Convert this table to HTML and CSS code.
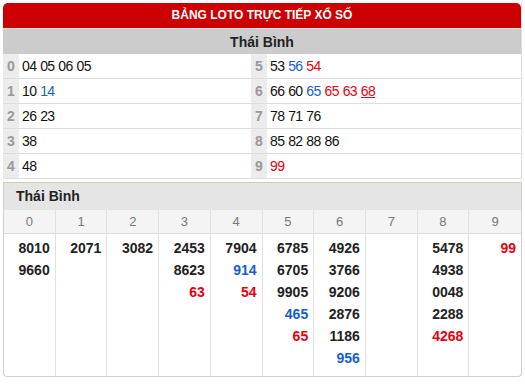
FILE: index.html
```html
<!DOCTYPE html>
<html>
<head>
<meta charset="utf-8">
<link rel="stylesheet" href="styles.css">
</head>
<body>
<div class="wrap">
  <div class="top">
    <div class="title">BẢNG LOTO TRỰC TIẾP XỔ SỐ</div>
    <div class="prov">Thái Bình</div>
    <div class="grid">
      <div class="row"><span class="d">0</span><span class="n">04 05 06 05</span></div>
      <div class="row"><span class="d">5</span><span class="n">53 <b class="bl">56</b> <b class="rd">54</b></span></div>
      <div class="row"><span class="d">1</span><span class="n">10 <b class="bl">14</b></span></div>
      <div class="row"><span class="d">6</span><span class="n">66 60 <b class="bl">65</b> <b class="rd">65</b> <b class="rd">63</b> <b class="rd u">68</b></span></div>
      <div class="row"><span class="d">2</span><span class="n">26 23</span></div>
      <div class="row"><span class="d">7</span><span class="n">78 71 76</span></div>
      <div class="row"><span class="d">3</span><span class="n">38</span></div>
      <div class="row"><span class="d">8</span><span class="n">85 82 88 86</span></div>
      <div class="row"><span class="d">4</span><span class="n">48</span></div>
      <div class="row"><span class="d">9</span><span class="n"><b class="rd">99</b></span></div>
    </div>
  </div>
  <div class="bottom">
    <div class="bhead">Thái Bình</div>
    <div class="cols heads">
      <div>0</div><div>1</div><div>2</div><div>3</div><div>4</div><div>5</div><div>6</div><div>7</div><div>8</div><div>9</div>
    </div>
    <div class="cols body">
      <div><p>8010</p><p>9660</p></div>
      <div><p>2071</p></div>
      <div><p>3082</p></div>
      <div><p>2453</p><p>8623</p><p class="rd">63</p></div>
      <div><p>7904</p><p class="bl">914</p><p class="rd">54</p></div>
      <div><p>6785</p><p>6705</p><p>9905</p><p class="bl">465</p><p class="rd">65</p></div>
      <div><p>4926</p><p>3766</p><p>9206</p><p>2876</p><p>1186</p><p class="bl">956</p></div>
      <div></div>
      <div><p>5478</p><p>4938</p><p>0048</p><p>2288</p><p class="rd">4268</p></div>
      <div><p class="rd">99</p></div>
    </div>
  </div>
</div>
</body>
</html>
```
FILE: styles.css
```css
* { box-sizing: border-box; }
body {
  margin: 0;
  background: #fff;
  font-family: "Liberation Sans", Arial, sans-serif;
  color: #222;
}
.wrap {
  width: 519px;
  margin: 3px 0 0 3px;
}
.top {
  border-right: 1px solid #ddd;
}
.title {
  height: 25px;
  line-height: 25px;
  background: #cc0000;
  color: #fff;
  font-weight: bold;
  font-size: 12px;
  text-align: center;
  border-radius: 5px 5px 0 0;
}
.prov {
  height: 26px;
  line-height: 26px;
  background: #cccccc;
  text-align: center;
  font-weight: bold;
  font-size: 14px;
  color: #222;
  border-top: 1px solid #e0e0e0;
}
.grid {
  display: grid;
  grid-template-columns: 248px 1fr;
}
.row {
  display: flex;
  height: 25px;
  border-bottom: 1px solid #dddddd;
}
.d {
  width: 16px;
  background: #ececec;
  color: #999;
  font-weight: bold;
  font-size: 14px;
  text-align: center;
  line-height: 24px;
}
.n {
  flex: 1;
  padding-left: 3px;
  font-size: 14px;
  line-height: 24px;
  color: #111;
  letter-spacing: -0.6px;
  word-spacing: 0.5px;
}
.n b { font-weight: normal; }
.bl { color: #1560c8; }
.rd { color: #e8000e; }
.u { text-decoration: underline; }
.bottom {
  margin-top: 3px;
  border: 1px solid #cfcfcf;
  border-top: 1px solid #d8c8ad;
  border-radius: 0 0 4px 4px;
  overflow: hidden;
}
.bhead {
  height: 27px;
  line-height: 27px;
  background: #e5e5e5;
  font-weight: bold;
  font-size: 14px;
  padding-left: 12px;
  color: #222;
}
.cols {
  display: grid;
  grid-template-columns: repeat(10, 1fr);
}
.cols > div {
  border-right: 1px solid #e2e2e2;
}
.cols > div:last-child { border-right: none; }
.heads {
  background: #f4f4f4;
  height: 24px;
  border-bottom: 1px solid #dedede;
}
.heads > div {
  text-align: center;
  line-height: 23px;
  font-size: 13px;
  color: #777;
}
.body {
  height: 142px;
  padding: 0;
}
.body > div {
  padding: 3px 5px 0 0;
  text-align: right;
}
.body p {
  margin: 0;
  font-weight: bold;
  font-size: 14px;
  line-height: 22px;
  color: #222;
}
.body p.bl { color: #1560c8; }
.body p.rd { color: #e8000e; }
```
